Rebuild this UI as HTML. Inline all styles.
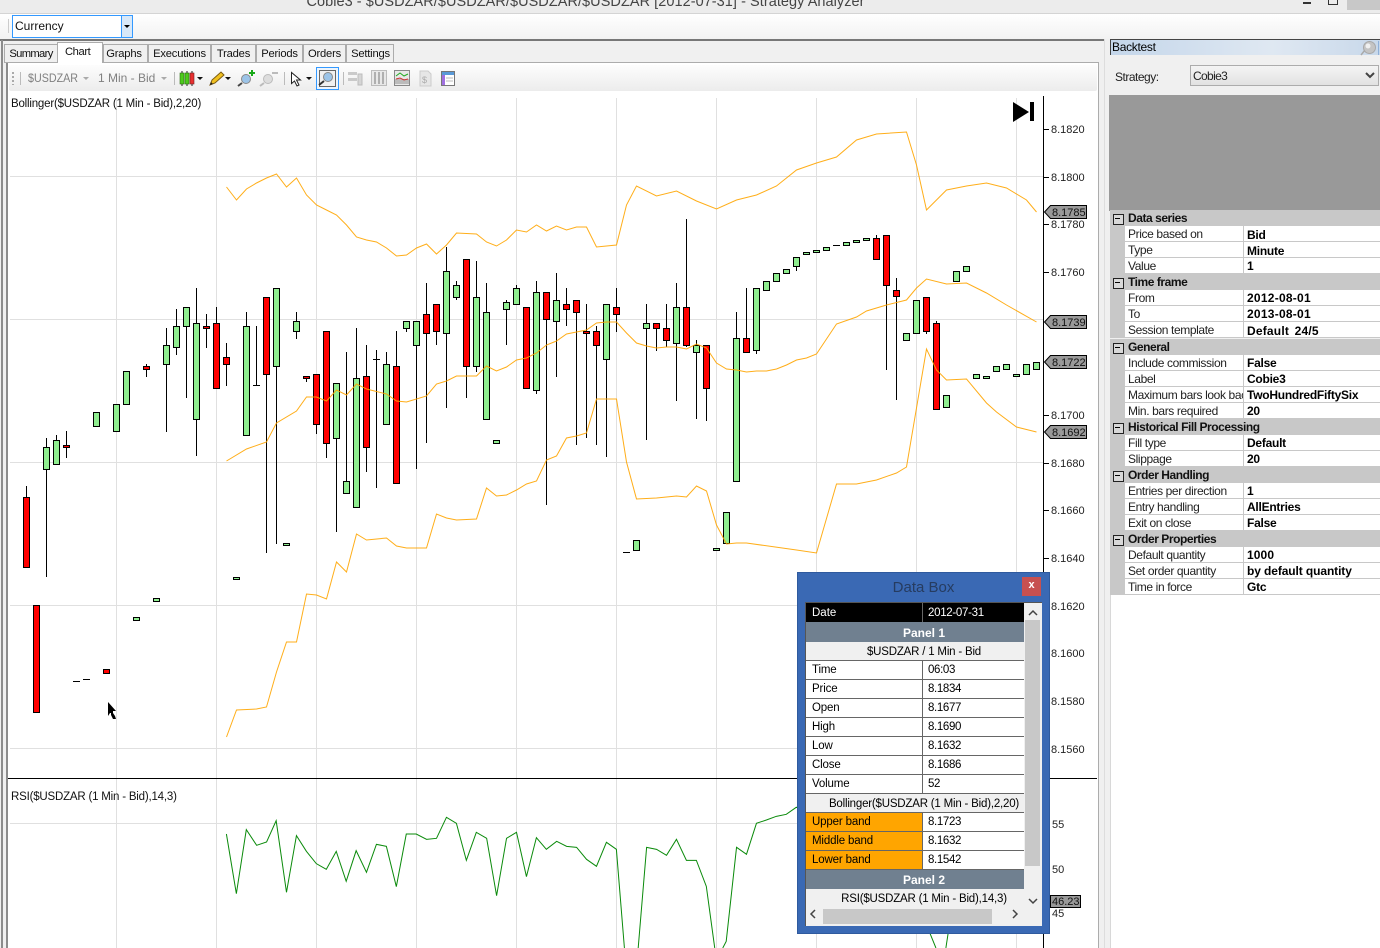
<!DOCTYPE html>
<html><head><meta charset="utf-8"><title>Strategy Analyzer</title>
<style>
html,body{margin:0;padding:0;width:1380px;height:948px;overflow:hidden;background:#f0f0f0;font-family:"Liberation Sans",sans-serif;font-size:12px;color:#000}
div{position:absolute;box-sizing:border-box;white-space:nowrap}
.tab{top:44px;height:19px;background:#f0f0f0;border:1px solid #acacac;text-align:center;line-height:19px;font-size:11.2px;letter-spacing:-.2px;color:#111}
.pg{left:1110px;width:270px;height:16px;line-height:16px;background:#fff;border-bottom:1px solid #c8c8c8}
.pg .g{left:0;top:0;width:15px;height:16px;background:#c8c8c8}
.pg .l{left:18px;top:0;width:116px;overflow:hidden;height:15px;color:#222;letter-spacing:-.38px}
.pg .v{left:133px;top:0;width:137px;height:15px;line-height:16px;overflow:hidden;border-left:1px solid #c8c8c8;padding-left:3px;font-weight:bold;letter-spacing:-.25px;color:#000}
.gr{left:1110px;width:270px;height:17px;line-height:16px;background:#c8c8c8;font-weight:bold;letter-spacing:-.45px}
.gr b{position:absolute;left:18px;top:0;color:#111}
.gr i{position:absolute;left:3px;top:4px;width:9px;height:9px;border:1px solid #222;background:#d8d8d8}
.gr i:after{content:"";position:absolute;left:1px;top:3px;width:5px;height:1px;background:#000}
.r{left:806px;width:218px;height:19px;line-height:17px;background:#fff;border-bottom:1px solid #666;font-size:11.5px}
.r .a{left:0;top:0;width:117px;height:18px;padding-left:6px;padding-top:1px;border-right:1px solid #666;letter-spacing:-.15px}
.r .b{left:117px;top:0;width:100px;height:18px;padding-left:5px;padding-top:1px;letter-spacing:-.35px}
.o .a{background:#ffa500}
.h{left:806px;width:218px;height:20px;padding-left:18px;background:#708090;color:#fff;font-weight:bold;text-align:center;line-height:22px;overflow:hidden}
.s{left:806px;width:218px;height:19px;padding-left:18px;padding-top:2px;background:#f0f0f0;border-bottom:1px solid #666;text-align:center;line-height:16px;font-size:11.5px;letter-spacing:-.2px;overflow:hidden}
</style></head><body>
<!-- title bar -->
<div style="left:0;top:0;width:1380px;height:13px;background:#ececec"></div>
<div style="left:0;top:-8px;width:1171px;height:20px;line-height:20px;text-align:center;font-size:14.5px;color:#444;letter-spacing:.05px">Cobie3 - $USDZAR/$USDZAR/$USDZAR/$USDZAR [2012-07-31] - Strategy Analyzer</div>
<div style="left:1303px;top:2px;width:8px;height:2px;background:#333"></div>
<div style="left:1328px;top:0;width:10px;height:5px;border:1px solid #333;border-top:0"></div>
<div style="left:1347px;top:0;width:33px;height:10px;background:#c8c8c8"></div>
<div style="left:0;top:13px;width:1380px;height:1px;background:#d4d4d4"></div>
<!-- top toolbar -->
<div style="left:0;top:14px;width:1380px;height:25px;background:linear-gradient(#fff,#f2f2f2)"></div>
<div style="left:8px;top:19px;width:1px;height:14px;background:#ccc"></div>
<div style="left:12px;top:15px;width:110px;height:23px;border:1px solid #3399ff;background:#fff;line-height:21px;padding-left:2px;font-size:12px;color:#111">Currency</div>
<div style="left:121px;top:15px;width:12px;height:23px;border:1px solid #3399ff;background:#d8e8f8"></div>
<div style="left:124px;top:25px;width:0;height:0;border:3px solid transparent;border-top:3px solid #000"></div>
<!-- main frame -->
<div style="left:0;top:39px;width:1104px;height:2px;background:#777"></div>
<div style="left:1104px;top:39px;width:1px;height:909px;background:#ddd"></div>
<div style="left:1px;top:40px;width:2px;height:908px;background:#8c8c8c"></div>
<div style="left:6px;top:63px;width:2px;height:885px;background:#8c8c8c"></div>
<div style="left:7px;top:62px;width:1092px;height:1px;background:#acacac"></div>
<div style="left:1098px;top:62px;width:1px;height:886px;background:#acacac"></div>
<!-- tabs -->
<div class="tab" style="left:4px;width:54px;letter-spacing:-.65px">Summary</div>
<div class="tab" style="left:103px;width:45px;padding-right:3px">Graphs</div>
<div class="tab" style="left:148px;width:63px">Executions</div>
<div class="tab" style="left:211px;width:45px">Trades</div>
<div class="tab" style="left:256px;width:47px">Periods</div>
<div class="tab" style="left:303px;width:43px">Orders</div>
<div class="tab" style="left:346px;width:48px;padding-left:1px">Settings</div>
<div class="tab" style="left:57px;top:42px;width:46px;height:21px;background:#fff;border-bottom:0;line-height:19px;text-align:left;padding-left:7px;letter-spacing:-.4px">Chart</div>
<!-- chart area -->
<div style="left:8px;top:63px;width:1090px;height:885px;background:#fff"></div>
<div style="left:9px;top:65px;width:1088px;height:26px;background:linear-gradient(#fdfdfd,#ececec);border-radius:2px"></div>
<svg style="position:absolute;left:0;top:0" width="1380" height="948" viewBox="0 0 1380 948" font-family="'Liberation Sans',sans-serif">
<!-- chart toolbar -->
<path d="M12 72h2v2h-2zM12 76h2v2h-2zM12 80h2v2h-2zM12 84h2v1h-2z" fill="#aaa"/>
<path d="M20.500 72V85M174.500 72V85M284.500 72V85M343.500 72V85" stroke="#bbb"/>
<text x="28" y="82" font-size="12" fill="#808080" textLength="50" lengthAdjust="spacingAndGlyphs">$USDZAR</text>
<text x="98" y="82" font-size="12" fill="#808080">1 Min - Bid</text>
<path d="M83 77h6l-3 3zM161 77h6l-3 3z" fill="#aaa"/>
<path d="M182 71V86M187 71V86M192 71V86" stroke="#222"/>
<rect x="180" y="73" width="4" height="11" fill="#4ccc1c" stroke="#2a6a10" stroke-width=".6"/><rect x="185" y="73" width="4" height="11" fill="#4ccc1c" stroke="#2a6a10" stroke-width=".6"/><rect x="190" y="73" width="4" height="11" fill="#e83030" stroke="#702020" stroke-width=".6"/>
<path d="M197 77h6l-3 3zM225 77h6l-3 3zM306 77h6l-3 3z" fill="#111"/>
<path d="M210 85l2-5 9-8 3 3-9 8z" fill="#f0c020" stroke="#7a5a10"/>
<path d="M210 85l1-3 2 2z" fill="#222"/>
<circle cx="246" cy="79" r="4.500" fill="#9cc4e8" stroke="#888"/><path d="M242 83l-4 3" stroke="#444" stroke-width="2"/><path d="M249 73h6M252 70v6" stroke="#18a818" stroke-width="2"/>
<circle cx="268" cy="79" r="4.500" fill="#ddd" stroke="#bbb"/><path d="M264 83l-4 3" stroke="#bbb" stroke-width="2"/><path d="M272 73h6" stroke="#bbb" stroke-width="2"/>
<path d="M291.500 72.500v11l3-2.500 2.500 5 2-1-2.500-5h4z" fill="#fff" stroke="#222"/>
<rect x="316.500" y="67.500" width="22" height="22" fill="#eef5fc" stroke="#3399ff"/>
<rect x="319.500" y="70.500" width="16" height="16" fill="#f0f0f0" stroke="#666"/>
<circle cx="328" cy="77" r="4.500" fill="#9cc4e8" stroke="#888"/><path d="M324 81l-5 4" stroke="#333" stroke-width="2"/>
<g opacity=".75"><path d="M348 72h9v3h-9zM348 78h9v3h-9z" fill="#bbb"/><path d="M358 74h4v11h-4z" fill="#ccc" stroke="#aaa"/>
<rect x="371.500" y="70.500" width="15" height="15" fill="#e4e4e4" stroke="#aaa"/><path d="M375 72v12M379 72v12M383 72v12" stroke="#999" stroke-width="2"/></g>
<rect x="394.500" y="70.500" width="15" height="15" fill="#e8e8e8" stroke="#888"/><path d="M395 84v-5l14 0v5z" fill="#bbb"/><path d="M396 76l4-3 4 3 4-2" stroke="#2a2" fill="none"/><path d="M396 79l4-1 4 2 4-1" stroke="#c33" fill="none"/>
<path d="M420 71h8l3 3v12h-11z" fill="#e6e6e6" stroke="#ccc"/><text x="422" y="83" font-size="9" fill="#aaa">$</text>
<rect x="441.500" y="71.500" width="13" height="14" fill="#fff" stroke="#777"/><path d="M442 72h12v3h-12z" fill="#5a9ad8"/><path d="M442 75h3v10h-3z" fill="#a070e0"/><path d="M446 78h7M446 81h7" stroke="#bbb"/>
<!-- grid -->
<path d="M116.500 98V948M216.500 98V948M316.500 98V948M416.500 98V948M516.500 98V948M616.500 98V948M716.500 98V948M816.500 98V948M916.500 98V948M1016.500 98V948M10 176.500H1043M10 319.500H1043M10 462.500H1043M10 605.500H1043M10 748.500H1043M10 823.500H1043" stroke="#e0e0e0" fill="none"/>
<!-- wicks -->
<path shape-rendering="crispEdges" stroke="#000" fill="none" d="M26.500 486V497M46.500 438V577M56.500 435V440M66.500 431V458M146.500 364V377M166.500 328V432M176.500 309V355M186.500 307V398M196.500 288V456M206.500 314V348M216.500 307V323M226.500 343V386M246.500 312V326M256.500 326V385M253 385.500H260M266.500 374V553M276.500 366V544M296.500 312V339M306.500 378V382M316.500 424V434M326.500 443V458M336.500 438V532M346.500 352V481M356.500 328V378M366.500 345V472M376.500 350V488M373 359.500H380M386.500 352V364M396.500 331V366M406.500 328V332M416.500 345V469M426.500 283V443M436.500 331V345M446.500 247V408M456.500 281V300M466.500 366V398M476.500 261V372M486.500 283V312M506.500 300V345M516.500 285V288M536.500 281V394M546.500 319V505M556.500 273V377M566.500 288V326M576.500 312V445M586.500 304V438M596.500 326V445M606.500 359V457M616.500 288V332M646.500 304V440M656.500 328V351M666.500 304V347M676.500 283V401M686.500 219V347M696.500 340V419M706.500 388V421M736.500 312V338M746.500 288V338M756.500 350V354M796.500 266V271M876.500 235V238M886.500 285V370M896.500 278V400M926.500 331V334M936.500 321V323M73 681.500H80M83 679.500H90M623 552.500H630M833 245.500H840"/>
<!-- green bodies -->
<path shape-rendering="crispEdges" stroke="#000" fill="#90ee90" d="M43.500 447.500h6v22h-6zM53.500 440.500h6v24h-6zM93.500 412.500h6v14h-6zM113.500 404.500h6v27h-6zM123.500 371.500h6v33h-6zM133.500 617.500h6v3h-6zM153.500 598.500h6v3h-6zM163.500 345.500h6v19h-6zM173.500 326.500h6v21h-6zM183.500 307.500h6v19h-6zM193.500 323.500h6v96h-6zM233.500 577.500h6v2h-6zM243.500 326.500h6v109h-6zM273.500 288.500h6v78h-6zM283.500 543.500h6v2h-6zM293.500 321.500h6v10h-6zM333.500 383.500h6v55h-6zM343.500 481.500h6v12h-6zM353.500 378.500h6v129h-6zM383.500 364.500h6v60h-6zM403.500 321.500h6v7h-6zM413.500 321.500h6v24h-6zM443.500 271.500h6v62h-6zM453.500 285.500h6v12h-6zM473.500 297.500h6v69h-6zM483.500 312.500h6v107h-6zM493.500 440.500h6v3h-6zM503.500 302.500h6v7h-6zM513.500 288.500h6v16h-6zM533.500 292.500h6v98h-6zM553.500 300.500h6v21h-6zM603.500 304.500h6v55h-6zM633.500 540.500h6v10h-6zM643.500 323.500h6v5h-6zM673.500 307.500h6v36h-6zM693.500 345.500h6v7h-6zM713.500 548.500h6v2h-6zM723.500 512.500h6v31h-6zM733.500 338.500h6v143h-6zM753.500 288.500h6v62h-6zM763.500 281.500h6v9h-6zM773.500 273.500h6v8h-6zM783.500 269.500h6v4h-6zM793.500 257.500h6v9h-6zM803.500 252.500h6v2h-6zM813.500 250.500h6v2h-6zM823.500 247.500h6v3h-6zM843.500 242.500h6v3h-6zM853.500 240.500h6v2h-6zM863.500 238.500h6v2h-6zM903.500 333.500h6v7h-6zM913.500 300.500h6v33h-6zM943.500 395.500h6v12h-6zM953.500 271.500h6v10h-6zM963.500 266.500h6v5h-6zM973.500 374.500h6v4h-6zM983.500 376.500h6v2h-6zM993.500 366.500h6v5h-6zM1003.500 364.500h6v5h-6zM1013.500 374.500h6v2h-6zM1023.500 364.500h6v10h-6zM1033.500 362.500h6v7h-6z"/>
<!-- red bodies -->
<path shape-rendering="crispEdges" stroke="#000" fill="#f00" d="M23.500 497.500h6v70h-6zM33.500 605.500h6v107h-6zM63.500 445.500h6v2h-6zM103.500 669.500h6v4h-6zM143.500 366.500h6v3h-6zM203.500 326.500h6v2h-6zM213.500 323.500h6v65h-6zM223.500 357.500h6v7h-6zM263.500 297.500h6v77h-6zM303.500 376.500h6v2h-6zM313.500 374.500h6v50h-6zM323.500 331.500h6v112h-6zM363.500 376.500h6v71h-6zM393.500 366.500h6v117h-6zM423.500 314.500h6v19h-6zM433.500 304.500h6v27h-6zM463.500 259.500h6v107h-6zM523.500 307.500h6v81h-6zM543.500 292.500h6v27h-6zM563.500 304.500h6v5h-6zM573.500 300.500h6v12h-6zM583.500 331.500h6v2h-6zM593.500 331.500h6v14h-6zM613.500 307.500h6v7h-6zM653.500 323.500h6v5h-6zM663.500 328.500h6v12h-6zM683.500 307.500h6v38h-6zM703.500 345.500h6v43h-6zM743.500 338.500h6v14h-6zM873.500 238.500h6v21h-6zM883.500 235.500h6v50h-6zM893.500 290.500h6v6h-6zM923.500 297.500h6v34h-6zM933.500 323.500h6v86h-6z"/>
<!-- bollinger -->
<g fill="none" stroke="#ffa500" stroke-width="1" opacity=".9">
<polyline points="226.500,187 236.500,200 246.500,189 256.500,183 266.500,178 276.500,174 286.500,187 296.500,178 306.500,195 316.500,205 326.500,210 336.500,215 346.500,225 356.500,237 366.500,240 376.500,242 386.500,248 396.500,256 406.500,255 416.500,248 426.500,244 436.500,254 446.500,245 456.500,233 476.500,234 486.500,242 496.500,246 506.500,240 516.500,230 526.500,232 536.500,225 546.500,231 556.500,226 566.500,230 576.500,227 586.500,227 596.500,247 616.500,245 626.500,205 636.500,186 656.500,196 676.500,191 696.500,201 716.500,209 736.500,200 756.500,195 776.500,186 796.500,170 816.500,163 836.500,157 856.500,140 876.500,134 906.500,132 916.500,165 926.500,210 946.500,190 966.500,186 986.500,183 1006.500,188 1026.500,200 1036.500,212"/>
<polyline points="226.500,461 246.500,449 266.500,442 276.500,423 296.500,411 306.500,397 316.500,397 326.500,401 336.500,390 346.500,395 356.500,384 366.500,389 386.500,394 396.500,401 406.500,402 426.500,396 436.500,384 446.500,381 456.500,376 476.500,376 486.500,366 496.500,371 506.500,367 516.500,360 526.500,358 536.500,353 546.500,345 556.500,341 566.500,334 576.500,332 586.500,330 596.500,323 606.500,322 616.500,322 626.500,333 636.500,343 646.500,346 656.500,348 666.500,347 676.500,347 686.500,349 696.500,344 706.500,348 716.500,363 726.500,369 736.500,370 746.500,372 756.500,371 766.500,371 776.500,369 786.500,365 796.500,360 806.500,358 816.500,354 836.500,324 856.500,317 866.500,311 886.500,305 906.500,300 916.500,288 926.500,279 946.500,284 966.500,283 986.500,293 1006.500,305 1036.500,322"/>
<polyline points="226.500,737 236.500,710 256.500,709 266.500,707 276.500,672 286.500,642 296.500,642 306.500,594 316.500,595 326.500,599 336.500,562 346.500,572 356.500,534 366.500,540 386.500,538 396.500,546 406.500,548 426.500,548 436.500,514 446.500,518 456.500,520 476.500,519 486.500,488 496.500,496 506.500,495 516.500,490 526.500,484 536.500,481 546.500,460 556.500,456 566.500,438 576.500,436 586.500,433 596.500,399 616.500,399 626.500,462 636.500,499 656.500,498 676.500,496 686.500,497 696.500,486 706.500,491 716.500,525 726.500,544 736.500,543 746.500,543 796.500,550 816.500,553 836.500,484 856.500,484 876.500,480 896.500,473 906.500,467 926.500,349 936.500,370 946.500,380 966.500,379 986.500,403 996.500,412 1016.500,427 1036.500,432"/>
</g>
<!-- RSI -->
<g transform="translate(200,770) scale(.3827,.3333)" fill="none" stroke="#0a8a0a" stroke-width="1"><polyline vector-effect="non-scaling-stroke" points="69,192 95,371 121,179 148,226 174,216 199,152 226,367 252,197 278,244 304,281 330,298 356,244 382,334 408,242 435,307 461,223 487,229 513,350 539,192 565,192 592,208 618,205 644,142 670,160 696,271 722,187 749,205 775,377 801,205 827,187 853,320 879,203 905,238 932,214 958,229 984,232 1010,268 1036,289 1062,217 1088,238 1109,534"/><polyline vector-effect="non-scaling-stroke" points="1145,534 1167,232 1193,238 1219,256 1245,208 1271,271 1297,271 1323,349 1345,534"/><polyline vector-effect="non-scaling-stroke" points="1366,534 1375,514 1402,232 1428,253 1454,160 1480,150 1506,139 1532,133 1558,112 1800,150 1907,489 1923,534"/><polyline vector-effect="non-scaling-stroke" points="1949,534 1955,489 1970,200"/></g>
<path d="M8 778.500H1097" stroke="#000"/>
<!-- axis -->
<path d="M1043.500 96V948" stroke="#000"/>
<path shape-rendering="crispEdges" stroke="#000" d="M1044 129.500h5M1044 177.500h5M1044 224.500h5M1044 272.500h5M1044 415.500h5M1044 463.500h5M1044 510.500h5M1044 558.500h5M1044 606.500h5M1044 653.500h5M1044 701.500h5M1044 749.500h5M1044 824.500h5M1044 869.500h5M1044 913.500h5"/>
<g font-size="11" fill="#222">
<text x="1051" y="133">8.1820</text><text x="1051" y="181">8.1800</text><text x="1051" y="228">8.1780</text><text x="1051" y="276">8.1760</text><text x="1051" y="419">8.1700</text><text x="1051" y="467">8.1680</text><text x="1051" y="514">8.1660</text><text x="1051" y="562">8.1640</text><text x="1051" y="610">8.1620</text><text x="1051" y="657">8.1600</text><text x="1051" y="705">8.1580</text><text x="1051" y="753">8.1560</text>
<text x="1052" y="828">55</text><text x="1052" y="873">50</text><text x="1052" y="917">45</text>
</g>
<text x="1051" y="367" font-size="11" fill="#222">8.1720</text>
<g fill="#999" stroke="#000"><path d="M1044.500 212l6-6.500h36v13h-36z"/><path d="M1044.500 322l6-6.500h36v13h-36z"/><path d="M1044.500 362l6-6.500h36v13h-36z"/><path d="M1044.500 432l6-6.500h36v13h-36z"/><rect x="1050.500" y="895.500" width="30" height="12"/></g>
<g font-size="11" fill="#111"><text x="1052" y="216">8.1785</text><text x="1052" y="326">8.1739</text><text x="1052" y="366">8.1722</text><text x="1052" y="436">8.1692</text><text x="1052" y="905">46.23</text></g>
<!-- texts -->
<text x="11" y="107" font-size="11.500" fill="#111" letter-spacing="-.2">Bollinger($USDZAR (1 Min - Bid),2,20)</text>
<text x="11" y="800" font-size="11.500" fill="#111" letter-spacing="-.2">RSI($USDZAR (1 Min - Bid),14,3)</text>
<path d="M1013 102v20l16-10zM1030 102h4v19h-4z" fill="#000"/>
<path d="M108 702v14l2-3h1v2l1 2 1 2h3l-1-3-2-3v-2h3z" fill="#000"/>
</svg>
<!-- right panel -->
<div style="left:1110px;top:595px;width:270px;height:353px;background:#fff;border-left:1px solid #d8d8d8"></div>
<div style="left:1110px;top:39px;width:270px;height:16px;background:linear-gradient(90deg,#c4d6ea,#dfe8f2 60%,#c8d8ea);border-top:1px solid #444;border-left:1px solid #444;line-height:15px;padding-left:1px;font-size:12px;letter-spacing:-.3px">Backtest</div>
<svg style="position:absolute;left:1360px;top:40px" width="20" height="16"><path d="M5 10l-4 5" stroke="#aaa" stroke-width="1.500"/><circle cx="9.500" cy="7.500" r="6" fill="#c4c4c4" stroke="#a8a8a8"/><circle cx="8" cy="6" r="2.500" fill="#f0f0f0"/><path d="M18.500 1v14" stroke="#8fb0d8"/></svg>
<div style="left:1115px;top:70px;line-height:15px;letter-spacing:-.5px;color:#222">Strategy:</div>
<div style="left:1190px;top:65px;width:189px;height:21px;border:1px solid #acacac;background:linear-gradient(#f4f4f4,#e2e2e2);line-height:20px;padding-left:2px;font-size:12px;letter-spacing:-.65px;color:#222">Cobie3</div>
<svg style="position:absolute;left:1365px;top:71px" width="12" height="10"><path d="M1 2l4 4 4-4" fill="none" stroke="#444" stroke-width="2"/></svg>
<div style="left:1109px;top:95px;width:271px;height:116px;background:#999"></div>
<div class="gr" style="top:210px"><i></i><b>Data series</b></div>
<div class="pg" style="top:226px"><div class="g"></div><div class="l">Price based on</div><div class="v" style="line-height:18px">Bid</div></div>
<div class="pg" style="top:242px"><div class="g"></div><div class="l">Type</div><div class="v" style="line-height:18px">Minute</div></div>
<div class="pg" style="top:258px"><div class="g"></div><div class="l">Value</div><div class="v">1</div></div>
<div class="gr" style="top:274px"><i></i><b>Time frame</b></div>
<div class="pg" style="top:290px"><div class="g"></div><div class="l">From</div><div class="v" style="letter-spacing:.25px">2012-08-01</div></div>
<div class="pg" style="top:306px"><div class="g"></div><div class="l">To</div><div class="v" style="letter-spacing:.25px">2013-08-01</div></div>
<div class="pg" style="top:322px"><div class="g"></div><div class="l">Session template</div><div class="v" style="letter-spacing:.2px;word-spacing:2px;line-height:18px">Default 24/5</div></div>
<div class="gr" style="top:339px"><i></i><b>General</b></div>
<div class="pg" style="top:355px"><div class="g"></div><div class="l">Include commission</div><div class="v">False</div></div>
<div class="pg" style="top:371px"><div class="g"></div><div class="l">Label</div><div class="v">Cobie3</div></div>
<div class="pg" style="top:387px"><div class="g"></div><div class="l">Maximum bars look back</div><div class="v">TwoHundredFiftySix</div></div>
<div class="pg" style="top:403px"><div class="g"></div><div class="l">Min. bars required</div><div class="v">20</div></div>
<div class="gr" style="top:419px"><i></i><b>Historical Fill Processing</b></div>
<div class="pg" style="top:435px"><div class="g"></div><div class="l">Fill type</div><div class="v">Default</div></div>
<div class="pg" style="top:451px"><div class="g"></div><div class="l">Slippage</div><div class="v">20</div></div>
<div class="gr" style="top:467px"><i></i><b>Order Handling</b></div>
<div class="pg" style="top:483px"><div class="g"></div><div class="l">Entries per direction</div><div class="v">1</div></div>
<div class="pg" style="top:499px"><div class="g"></div><div class="l">Entry handling</div><div class="v">AllEntries</div></div>
<div class="pg" style="top:515px"><div class="g"></div><div class="l">Exit on close</div><div class="v">False</div></div>
<div class="gr" style="top:531px"><i></i><b>Order Properties</b></div>
<div class="pg" style="top:547px"><div class="g"></div><div class="l">Default quantity</div><div class="v" style="letter-spacing:.1px">1000</div></div>
<div class="pg" style="top:563px"><div class="g"></div><div class="l">Set order quantity</div><div class="v" style="letter-spacing:-.1px">by default quantity</div></div>
<div class="pg" style="top:579px"><div class="g"></div><div class="l">Time in force</div><div class="v">Gtc</div></div>
<!-- data box -->
<div style="left:797px;top:572px;width:253px;height:362px;background:#3a69b4;border:1px solid #2f5a9e"></div>
<div style="left:797px;top:577px;width:253px;height:22px;line-height:22px;text-align:center;font-size:15px;color:#263c60">Data Box</div>
<div style="left:1022px;top:577px;width:19px;height:19px;background:#c75050;color:#fff;text-align:center;line-height:17px;font-weight:bold;font-size:11px">x</div>
<div style="left:805px;top:602px;width:237px;height:324px;background:#f0f0f0;border:1px solid #555;border-width:1px 0 0 1px"></div>
<div style="left:806px;top:603px;width:218px;height:19px;background:#000;color:#fff;line-height:17px;font-size:11.5px"><div style="left:0;top:0;width:117px;height:19px;padding-left:6px;padding-top:2px;border-right:1px solid #666">Date</div><div style="left:117px;top:0;padding-left:5px;padding-top:2px;letter-spacing:-.3px">2012-07-31</div></div>
<div class="h" style="top:622px">Panel 1</div>
<div class="s" style="top:642px">$USDZAR / 1 Min - Bid</div>
<div class="r" style="top:661px"><div class="a">Time</div><div class="b">06:03</div></div>
<div class="r" style="top:680px"><div class="a">Price</div><div class="b">8.1834</div></div>
<div class="r" style="top:699px"><div class="a">Open</div><div class="b">8.1677</div></div>
<div class="r" style="top:718px"><div class="a">High</div><div class="b">8.1690</div></div>
<div class="r" style="top:737px"><div class="a">Low</div><div class="b">8.1632</div></div>
<div class="r" style="top:756px"><div class="a">Close</div><div class="b">8.1686</div></div>
<div class="r" style="top:775px"><div class="a">Volume</div><div class="b">52</div></div>
<div class="s" style="top:794px">Bollinger($USDZAR (1 Min - Bid),2,20)</div>
<div class="r o" style="top:813px"><div class="a">Upper band</div><div class="b">8.1723</div></div>
<div class="r o" style="top:832px"><div class="a">Middle band</div><div class="b">8.1632</div></div>
<div class="r o" style="top:851px"><div class="a">Lower band</div><div class="b">8.1542</div></div>
<div class="h" style="top:870px;height:19px;line-height:21px">Panel 2</div>
<div class="s" style="top:889px;border:0">RSI($USDZAR (1 Min - Bid),14,3)</div>
<div style="left:1025px;top:620px;width:15px;height:246px;background:#c8c8c8"></div>
<div style="left:823px;top:909px;width:169px;height:15px;background:#c8c8c8"></div>
<svg style="position:absolute;left:805px;top:602px" width="237" height="324" fill="none" stroke="#444" stroke-width="1.500"><path d="M224 13l4-4 4 4M224 297l4 4 4-4M10 308l-4 4 4 4M208 308l4 4-4 4"/></svg>
</body></html>
